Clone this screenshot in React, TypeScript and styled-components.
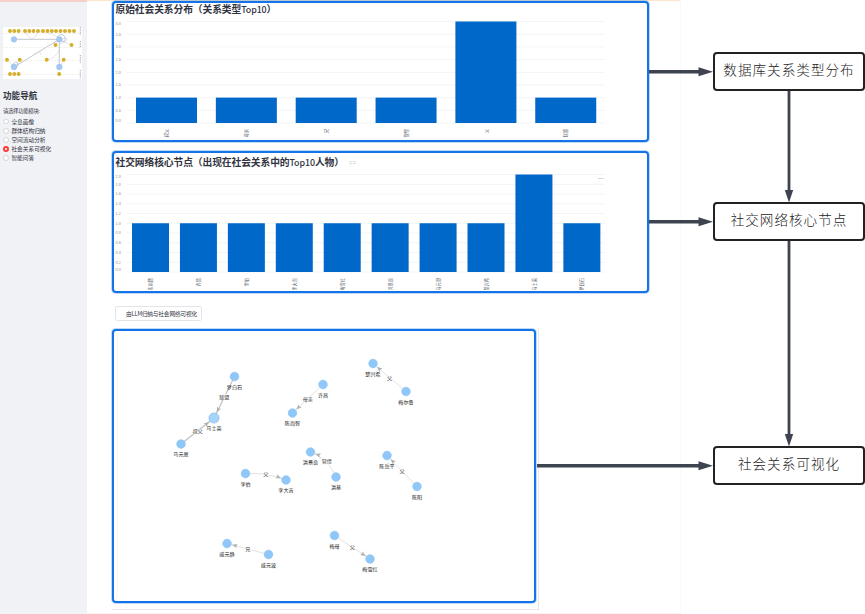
import React from "react";
import styled, { createGlobalStyle } from "styled-components";

const GlobalStyle = createGlobalStyle`
  * { box-sizing: border-box; }
  html, body { margin: 0; padding: 0; background: #fff; overflow: hidden; }
  body { font-family: "Noto Sans", "Noto Sans CJK SC", sans-serif; color: #31333f; }
`;

const Page = styled.div`
  position: relative;
  display: grid;
  grid-template-columns: 87px 594px 184px;
  width: 865px;
  height: 614px;
  background: #fff;
`;

const Sidebar = styled.aside`
  display: flex;
  flex-direction: column;
  background: #f0f2f6;
  border-top: 2px solid #f6cfcb;
  padding: 25px 0 0 3px;
`;

const Thumbnail = styled.svg`
  display: block;
  width: 79px;
  height: 52px;
`;

const NavTitle = styled.h2`
  margin: 9px 0 0;
  font: 700 8.6px/14px "Noto Sans CJK SC", sans-serif;
`;

const NavHint = styled.p`
  margin: 4px 0 1px;
  font: 400 5.4px/10px "Noto Sans CJK SC", sans-serif;
  letter-spacing: -0.35px;
  color: #3e404b;
`;

const NavItem = styled.div`
  display: flex;
  align-items: center;
  gap: 2.6px;
  height: 9.1px;
  font: 400 5.7px/9px "Noto Sans CJK SC", sans-serif;
`;

const Radio = styled.span<{ $on?: boolean }>`
  width: 5.8px;
  height: 5.8px;
  border-radius: 50%;
  background: #fff;
  border: ${(p) => (p.$on ? "2px solid #ff3b3b" : "1px solid #d3d5db")};
  flex: none;
`;

const Main = styled.main`
  display: flex;
  flex-direction: column;
  align-items: flex-start;
  padding-left: 25px;
  border-right: 1px solid #fafafa;
  border-top: 1px solid #fbe6cf;
  border-bottom: 1px solid #fbeeee;
`;

const Frame = styled.section<{ $w: number; $h: number; $mt?: number }>`
  width: ${(p) => p.$w}px;
  height: ${(p) => p.$h}px;
  margin-top: ${(p) => p.$mt ?? 0}px;
  flex: none;
  border: 2px solid #1473e6;
  box-shadow: 0 0 0 1px rgba(20, 115, 230, 0.28);
  border-radius: 4px;
  background: #fff;
  overflow: hidden;
`;

const ChartTitle = styled.h3<{ $drop?: number }>`
  display: flex;
  align-items: center;
  gap: 5px;
  margin: 0;
  height: 15px;
  padding: ${(p) => p.$drop ?? 0}px 0 ${(p) => (p.$drop ? 0 : 2)}px 1.5px;
  font: 700 9.78px/13px "Noto Sans CJK SC", sans-serif;
  white-space: nowrap;
`;

const TitleText = styled.span`
  letter-spacing: -0.1px;
`;

const Latin = styled.span`
  font-weight: 500;
  font-size: 8.9px;
`;

const LinkMark = styled.span`
  font-size: 3.6px;
  font-weight: 400;
  letter-spacing: -0.3px;
  color: #85878f;
`;

const ChartSvg = styled.svg`
  display: block;
  font-family: "Noto Sans CJK SC", sans-serif;
`;

const RunButton = styled.button`
  margin: 13px 0 0 3px;
  width: 87px;
  height: 15px;
  flex: none;
  padding: 0 0 0 6px;
  border: 1px solid #e3e4e8;
  border-radius: 2.5px;
  background: #fff;
  color: #31333f;
  font: 400 5.7px/11px "Noto Sans CJK SC", sans-serif;
  letter-spacing: -0.18px;
  white-space: nowrap;
`;

const GraphShell = styled.div`
  width: 427px;
  height: 281px;
  flex: none;
  margin-top: 8px;
  border-right: 1px solid #e6e6e6;
  border-bottom: 1px solid #e6e6e6;
`;

const FlowColumn = styled.aside`
  display: flex;
  flex-direction: column;
  padding: 52px 0 0 32px;
`;

const FlowBox = styled.div<{ $mb?: number }>`
  display: flex;
  align-items: center;
  justify-content: center;
  width: 152px;
  height: 39px;
  margin-bottom: ${(p) => p.$mb ?? 0}px;
  padding-bottom: 5px;
  border: 2px solid #222;
  border-radius: 4px;
  background: #fff;
  color: #222;
  font: 300 13.6px/20px "Noto Sans CJK SC", sans-serif;
  letter-spacing: 1px;
`;

const Connectors = styled.svg`
  position: absolute;
  inset: 0;
  pointer-events: none;
`;

interface Bar { label: string; value: number }
interface BarChartProps {
  bars: Bar[]; ticks: string[]; max: number; top: number; base: number;
  start: number; pitch: number; width: number; height: number; menu?: boolean;
}

function BarChart({ bars, ticks, max, top, base, start, pitch, width, height, menu }: BarChartProps) {
  const step = (base - top) / (ticks.length - 1);
  return (
    <ChartSvg width={532} height={height}>
      {ticks.map((t, i) => (
        <g key={i}>
          <line x1={12.5} x2={491} y1={top + i * step} y2={top + i * step} stroke="#f0f1f4" strokeWidth={0.8} />
          <text x={1.6} y={i === 0 ? top + 3.2 : i === ticks.length - 1 ? base - 1 : top + i * step + 1.4} fontSize={3.9} fill="#8d8f98">{t}</text>
        </g>
      ))}
      {bars.map((b, i) => {
        const x = start + i * pitch;
        const h = ((base - top) * b.value) / max;
        return (
          <g key={i}>
            <rect x={x} y={base - h} width={width} height={h} fill="#0068c9" />
            <text transform={`translate(${x + width / 2 + 1.6} ${base + 6}) rotate(-90)`} textAnchor="end" fontSize={4.3} fill="#555866">{b.label}</text>
          </g>
        );
      })}
      {menu && <line x1={484} x2={489.5} y1={top + 4} y2={top + 4} stroke="#d5d6da" strokeWidth={1} />}
    </ChartSvg>
  );
}

const relationBars: Bar[] = [
  { label: "叔父", value: 1 }, { label: "母亲", value: 1 }, { label: "兄", value: 1 },
  { label: "管侄", value: 1 }, { label: "父", value: 4 }, { label: "联盟", value: 1 },
];

const personBars: Bar[] = [
  { label: "陈尚智", value: 1 }, { label: "许昌", value: 1 }, { label: "李伯", value: 1 },
  { label: "李大吉", value: 1 }, { label: "梅雪红", value: 1 }, { label: "洪景良", value: 1 },
  { label: "马元恩", value: 1 }, { label: "楚兴希", value: 1 }, { label: "马士英", value: 2 },
  { label: "梦白石", value: 1 },
];

interface GNode { x: number; y: number; label: string; hub?: boolean }
interface GEdge { from: number; to: number; label: string; bend?: number }

const nodes: GNode[] = [
  { x: 234.5, y: 376.5, label: "梦白石" },
  { x: 214, y: 418, label: "马士英", hub: true },
  { x: 181, y: 444, label: "马元恩" },
  { x: 323, y: 384.5, label: "许昌" },
  { x: 292.5, y: 413, label: "陈尚智" },
  { x: 373, y: 363.5, label: "楚兴希" },
  { x: 406, y: 391.5, label: "梅尔鲁" },
  { x: 310.5, y: 452, label: "洪景良" },
  { x: 336, y: 477, label: "洪基" },
  { x: 245.5, y: 473.5, label: "李伯" },
  { x: 286, y: 480, label: "李大吉" },
  { x: 387, y: 455.5, label: "陈岳平" },
  { x: 417, y: 486.5, label: "陈阳" },
  { x: 227, y: 543.5, label: "戚元静" },
  { x: 268.5, y: 554.5, label: "戚元波" },
  { x: 334.5, y: 535.5, label: "梅母" },
  { x: 370, y: 559, label: "梅雪红" },
];

const edges: GEdge[] = [
  { from: 0, to: 1, label: "联盟" },
  { from: 2, to: 1, label: "叔父" },
  { from: 3, to: 4, label: "母亲" },
  { from: 6, to: 5, label: "父" },
  { from: 8, to: 7, label: "管侄", bend: -4 },
  { from: 9, to: 10, label: "父", bend: -3 },
  { from: 12, to: 11, label: "父" },
  { from: 14, to: 13, label: "兄" },
  { from: 15, to: 16, label: "父" },
];

function RelationGraph() {
  return (
    <ChartSvg width={420} height={270} viewBox="114 331 420 270">
      <path d="M117 331V601" stroke="#f1f1f1" strokeWidth={0.8} />
      {edges.map((e, i) => {
        const a = nodes[e.from];
        const b = nodes[e.to];
        const lx = (a.x + b.x) / 2 + (e.label === "管侄" ? 3.5 : 0);
        const mx = (a.x + b.x) / 2 + (e.label === "管侄" ? 5 : 0);
        const my = (a.y + b.y) / 2 + (e.bend ?? 0);
        const cy = my + (e.bend ?? 0) / 2;
        const ang = (Math.atan2(b.y - cy, b.x - mx) * 180) / Math.PI;
        const r = b.hub ? 6 : 5;
        return (
          <g key={i}>
            <path d={`M${a.x} ${a.y}Q${mx} ${cy} ${b.x} ${b.y}`} fill="none" stroke={i < 2 ? "#bcbcbc" : "#d6d6d6"} strokeWidth={i < 2 ? 1.1 : 0.7} />
            <path transform={`translate(${b.x} ${b.y}) rotate(${ang})`} d={`M${-r} 0L${-r - 5.5} -2.2L${-r - 4.5} 0L${-r - 5.5} 2.2Z`} fill="#b2b2b2" />
            <text x={lx} y={my + 2} textAnchor="middle" fontSize={5.1} fill="#3d3d3d" stroke="#fff" strokeWidth={0.8} paintOrder="stroke">{e.label}</text>
          </g>
        );
      })}
      {nodes.map((n, i) => (
        <g key={i}>
          <circle cx={n.x} cy={n.y} r={n.hub ? 5.1 : 4.3} fill={n.hub ? "#a5d4fb" : "#8fc8f8"} stroke={n.hub ? "#7eb6e8" : "#83bff2"} strokeWidth={0.6} />
          <text x={n.x} y={n.y + 12} textAnchor="middle" fontSize={5.1} fill="#222">{n.label}</text>
        </g>
      ))}
    </ChartSvg>
  );
}

const dotsTop = [10, 14.3, 18.6, 25, 29.3, 33.5, 38, 43, 47.5, 51.8, 56, 60.5, 65, 69.5, 74];
const dotsOther = [[55.5, 45], [71.5, 45], [7, 59.7], [19.8, 59.7], [46.7, 59.7], [63.7, 59.7], [10, 74], [14.3, 74], [18.6, 74], [59.2, 74]];
const hubs = [[14, 39.3], [59.3, 39.3], [14, 67], [59.3, 67]];

function ThumbnailGraph() {
  return (
    <Thumbnail viewBox="3 27 79 52">
      <rect x={3} y={27} width={79} height={52} rx={1.5} fill="#fff" />
      <path d="M3 33.5H80M3 47.5H80M3 60.5H80M3 74.5H80" stroke="#e5e2d6" strokeWidth={0.5} strokeDasharray="2 1" />
      <path d="M80.3 27V35M80.3 41V48M80.3 55V63M80.3 70V78" stroke="#8d8d8d" strokeWidth={0.8} strokeDasharray="1 0.7" />
      <path d="M14 39.3H59.3V67M14 67L59.3 39.3" fill="none" stroke="#b4b7bc" strokeWidth={0.8} />
      <path d="M26 31Q27 38 32 39Q37 37 37 31M38 31Q54 33 59 39M59 39Q72 37 65 42L60 44M59 39L71 45M55 45L59 39M7 60L14 67M20 60L14 67M47 60Q57 57 59 50M64 60L59 67M34 54Q42 50 41 55" fill="none" stroke="#c8cacf" strokeWidth={0.5} />
      <path d="M57 37Q62 32 65 37Q66 43 61 41M12 69Q11 64 16 62Q20 63 16 68" fill="none" stroke="#8d9db4" strokeWidth={0.5} />
      {hubs.map(([x, y]) => <circle key={`${x}-${y}`} cx={x} cy={y} r={2.9} fill="#a5c9f3" stroke="#8db8ea" strokeWidth={0.3} />)}
      {dotsTop.map((x) => <circle key={x} cx={x} cy={31} r={1.95} fill="#d5ae2a" />)}
      {dotsOther.map(([x, y]) => <circle key={`${x}-${y}`} cx={x} cy={y} r={1.95} fill="#d5ae2a" />)}
    </Thumbnail>
  );
}

const navItems = ["全息画像", "群体结构归纳", "空间流动分析", "社会关系可视化", "智能问答"];

export default function App() {
  return (
    <>
      <GlobalStyle />
      <Page>
        <Sidebar>
          <ThumbnailGraph />
          <NavTitle>功能导航</NavTitle>
          <NavHint>请选择功能模块:</NavHint>
          {navItems.map((item) => (
            <NavItem key={item}>
              <Radio $on={item === "社会关系可视化"} />
              {item}
            </NavItem>
          ))}
        </Sidebar>
        <Main>
          <Frame $w={537} $h={141}>
            <ChartTitle><TitleText>原始社会关系分布（关系类型<Latin>Top10</Latin>）</TitleText></ChartTitle>
            <BarChart bars={relationBars} max={4} ticks={["4.0", "3.5", "3.0", "2.5", "2.0", "1.5", "1.0", "0.5", "0.0"]}
              top={3.5} base={105} start={22} pitch={79.85} width={61} height={122} />
          </Frame>
          <Frame $w={537} $h={142} $mt={9}>
            <ChartTitle $drop={3}>
              <TitleText>社交网络核心节点（出现在社会关系中的<Latin>Top10</Latin>人物）</TitleText>
              <LinkMark>⊂⊃</LinkMark>
            </ChartTitle>
            <BarChart bars={personBars} max={2} ticks={["2.0", "1.8", "1.6", "1.4", "1.2", "1.0", "0.8", "0.6", "0.4", "0.2", "0.0"]}
              top={6.5} base={104} start={18} pitch={47.93} width={37} height={122} menu />
          </Frame>
          <RunButton>由LLM归纳与社会网络可视化</RunButton>
          <GraphShell>
            <Frame $w={424} $h={274}>
              <RelationGraph />
            </Frame>
          </GraphShell>
        </Main>
        <FlowColumn>
          <FlowBox $mb={111}>数据库关系类型分布</FlowBox>
          <FlowBox $mb={205}>社交网络核心节点</FlowBox>
          <FlowBox>社会关系可视化</FlowBox>
        </FlowColumn>
        <Connectors width={865} height={614}>
          <path d="M649 71.7H700M649 221.7H700M537 465.8H700" stroke="#3d434f" strokeWidth={3.6} />
          <path d="M789 91V191M789 241V435" stroke="#3d434f" strokeWidth={2.8} />
          <path d="M698.5 67.2L713 71.7L698.5 76.2ZM698.5 217.2L713 221.7L698.5 226.2ZM698.5 461.3L713 465.8L698.5 470.3ZM784.8 190L789 202.5L793.2 190ZM784.8 434L789 446.5L793.2 434Z" fill="#3d434f" />
        </Connectors>
      </Page>
    </>
  );
}
